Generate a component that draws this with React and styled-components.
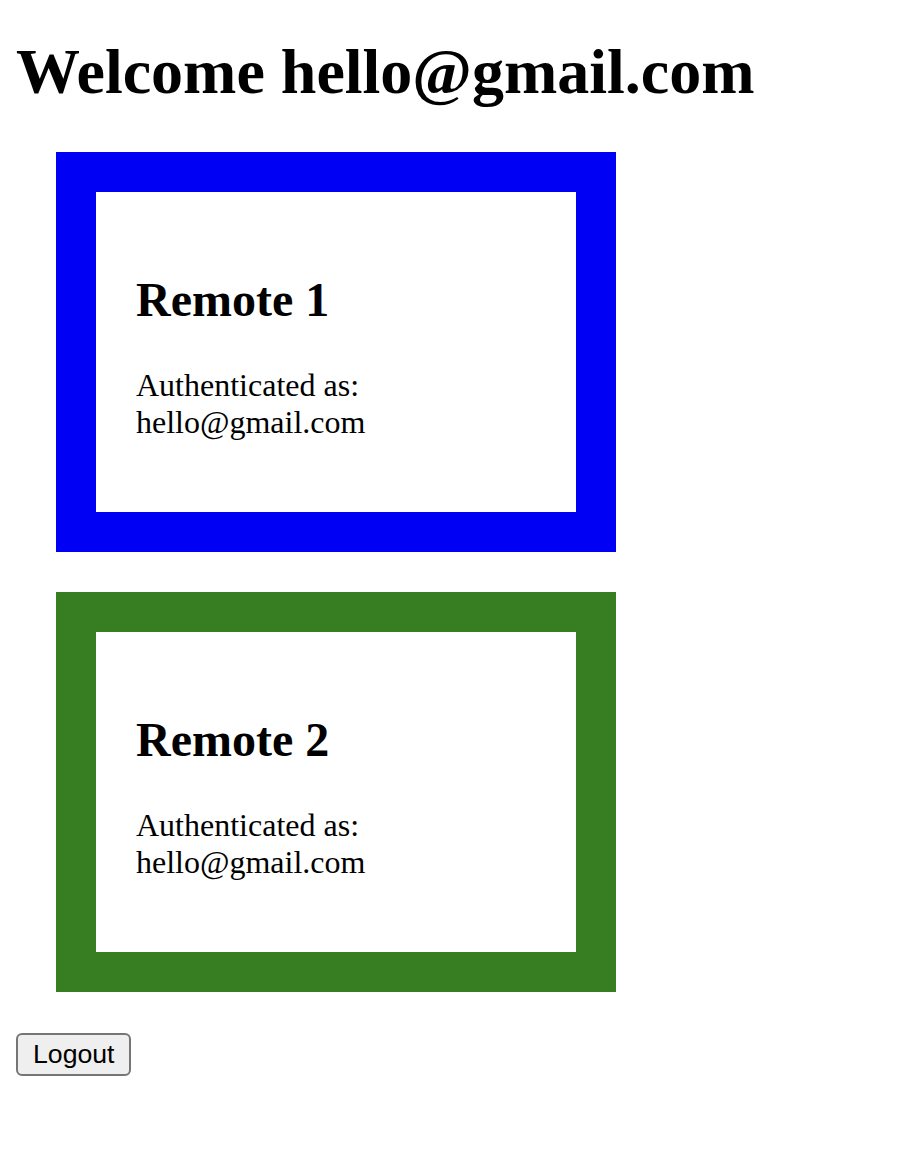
import React from "react";
import styled, { createGlobalStyle } from "styled-components";

const GlobalStyle = createGlobalStyle`
  html, body { background: #ffffff; }
  body {
    margin: 16px;
    font-family: "Liberation Serif", "Times New Roman", serif;
    color: #000000;
  }
`;

const Heading = styled.h1`
  font-size: 64px;
  font-weight: bold;
  line-height: 64px;
  margin: 24px 0 48px;
`;

const RemoteCard = styled.section`
  width: 400px;
  margin: 40px;
  padding: 40px;
  background: #ffffff;
  border: 40px solid ${(p) => p.$color};
`;

const RemoteTitle = styled.h2`
  font-size: 48px;
  font-weight: bold;
  line-height: 55.2px;
  margin: 40px 0;
`;

const RemoteText = styled.p`
  font-size: 32px;
  line-height: 36.4px;
  margin: 32px 0;
`;

const LogoutButton = styled.button`
  display: inline-block;
  margin-top: 1px;
  font-family: "Liberation Sans", Arial, sans-serif;
  font-size: 26.67px;
  line-height: 31px;
  padding: 4px 14px 4px 15px;
  color: #000000;
  background: #efefef;
  border: 2px solid #767676;
  border-radius: 6px;
`;

const remotes = [
  { name: "Remote 1", color: "#0000f5" },
  { name: "Remote 2", color: "#377e22" },
];

export default function App() {
  const email = "hello@gmail.com";
  return (
    <>
      <GlobalStyle />
      <Heading>Welcome {email}</Heading>
      {remotes.map((r) => (
        <RemoteCard key={r.name} $color={r.color}>
          <RemoteTitle>{r.name}</RemoteTitle>
          <RemoteText>Authenticated as: {email}</RemoteText>
        </RemoteCard>
      ))}
      <LogoutButton>Logout</LogoutButton>
    </>
  );
}
